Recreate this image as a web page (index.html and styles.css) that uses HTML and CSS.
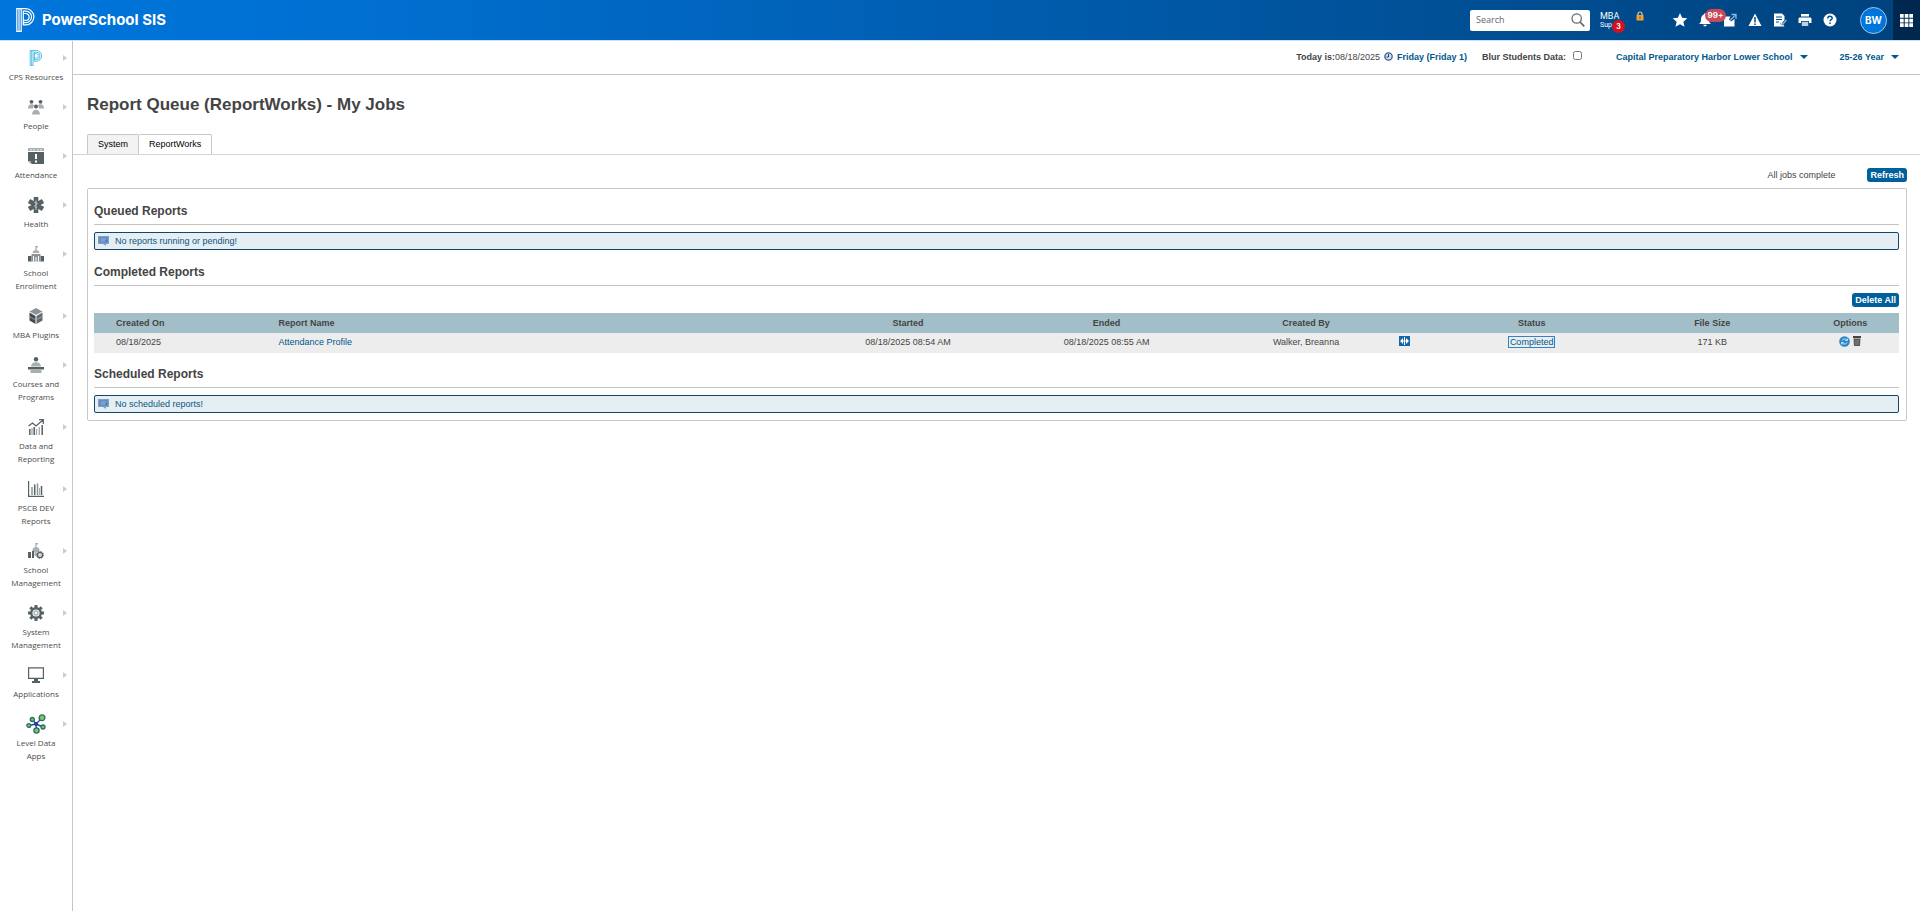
FILE: index.html
```html
<!DOCTYPE html>
<html lang="en">
<head>
<meta charset="utf-8">
<title>Report Queue (ReportWorks) - My Jobs</title>
<link rel="stylesheet" href="styles.css">
</head>
<body>
<svg class="defs" aria-hidden="true">
  <symbol id="ps" viewBox="0 0 19 24"><g fill="none" stroke="currentColor" stroke-width="1.200"><path d="M.8.7h4.4v22.6H.8zM3 .7v22.6"/><path d="M5.200 .7h4.600a8.100 8.100 0 0 1 0 16.200H7.300V3.100h2.500a5.700 5.700 0 0 1 0 11.500H7.300M7.300 5.500h2.400a3.400 3.400 0 0 1 0 6.800H7.300"/></g></symbol>
  <symbol id="note" viewBox="0 0 11 10"><path d="M0 0h11v8H8v2L5 8H0z" fill="#7d9fcb"/><path d="M1.500 1.500h8v5h-8z" fill="#4c78b5"/><path d="M2.500 3h6M2.500 5h5" stroke="#a9c3e4"/></symbol>
</svg>
<header class="topbar">
  <a class="brand" href="#"><svg class="brand-mark"><use href="#ps"/></svg>PowerSchool SIS</a>
  <div class="tools">
    <form class="search"><input type="search" placeholder="Search" aria-label="Search"><button type="button" aria-label="Run search"><svg viewBox="0 0 14 14" width="14" height="14"><g fill="none" stroke="#666" stroke-width="1.200"><circle cx="5.700" cy="5.500" r="4.700"/><path d="M9 9l4.300 4.300" stroke-width="1.700"/></g></svg></button></form>
    <a class="mba" href="#"><span>MBA</span><span class="mba-sub">Sup</span><span class="mba-count">3</span></a>
    <a class="lock" href="#" aria-label="Lock"><svg viewBox="0 0 8 10" width="8" height="10"><path d="M2 5V3a2 2 0 0 1 4 0v2" fill="none" stroke="#d8d0c0" stroke-width="1.200"/><path d="M.5 4h7v5.500h-7z" fill="#f3a136"/><path d="M4 5.500v2.500" stroke="#85500c"/></svg></a>
    <nav class="icons">
      <a href="#" aria-label="Favorites"><svg viewBox="0 0 16 16"><path fill="#fff" d="M8 1l2.100 4.800 5.200.5-3.900 3.400 1.100 5.100L8 12.200l-4.500 2.600 1.100-5.100L.7 6.300l5.200-.5z"/></svg></a>
      <a class="bell" href="#" aria-label="Notifications"><svg viewBox="0 0 16 16"><path fill="#fff" d="M8 1.500c1 0 1.300.6 1.300 1.200C11.500 3.500 12 5.500 12 8c0 2 .8 3 2 4H2c1.200-1 2-2 2-4 0-2.500.5-4.500 2.700-5.300C6.700 2 7 1.500 8 1.500zM6.300 12.700h3.400a1.700 1.700 0 0 1-3.400 0z"/></svg><span class="badge">99+</span></a>
      <a href="#" aria-label="Open window"><svg viewBox="0 0 16 16"><path fill="#fff" d="M2 4.500h6.500L7 7.500l2 2L12.500 7v7.500H2z"/><path d="M8 8.500L13 3.500M9.500 2.500H14V7" fill="none" stroke="#8eb4d8" stroke-width="1.300"/></svg></a>
      <a href="#" aria-label="Alerts"><svg viewBox="0 0 16 16"><path fill="#fff" d="M8 1.500l6.500 12.500h-13z"/><path d="M8 5v5.500M8 11.500v1.500" stroke="#004b8f" stroke-width="1.500"/></svg></a>
      <a href="#" aria-label="Report queue"><svg viewBox="0 0 16 16"><path fill="#fff" d="M2 1.500h8l2.500 2.500v4L10 11l2.500 3.500H2z"/><path d="M4 5h6M4 7.500h6M4 10h3" stroke="#004b8f"/><path d="M8 11l2 2 4.500-5" fill="none" stroke="#8eb4d8" stroke-width="1.300"/></svg></a>
      <a href="#" aria-label="Print"><svg viewBox="0 0 16 16"><path fill="#fff" d="M4 2h8v2.500H4zM3 5.500h10c1 0 1.500.6 1.500 1.500v4H12V9H4v2H1.500V7c0-1 .5-1.500 1.500-1.500z"/><path fill="#b9d0e6" d="M4.800 9.800h6.400v4.200H4.800z"/></svg></a>
      <a href="#" aria-label="Help"><svg viewBox="0 0 16 16"><circle cx="8" cy="8" r="6.500" fill="#fff"/><path d="M5.800 6.500C5.800 3.700 10.200 3.700 10.200 6.200 10.200 7.700 8 7.700 8 9.300M8 10.500v1.500" fill="none" stroke="#004b8f" stroke-width="1.500"/></svg></a>
    </nav>
    <button class="avatar" type="button">BW</button>
    <button class="apps" type="button" aria-label="App switcher"><svg viewBox="0 0 13 13" width="13" height="13"><path fill="#fff" d="M0 0h3.700v3.700H0zM4.700 0h3.700v3.700H4.700zM9.300 0H13v3.700H9.300zM0 4.700h3.700v3.700H0zM4.700 4.700h3.700v3.700H4.700zM9.300 4.700H13v3.700H9.300zM0 9.300h3.700V13H0zM4.700 9.300h3.700V13H4.700zM9.300 9.300H13V13H9.300z"/></svg></button>
  </div>
</header>
<div class="shell">
  <nav class="side">
    <a href="#"><svg class="ps-icon"><use href="#ps"/></svg><span>CPS Resources</span></a>
    <a href="#"><svg viewBox="0 0 16 16"><g fill="#566166"><circle cx="3.500" cy="2.800" r="1.900"/><circle cx="12.500" cy="2.800" r="1.900"/><circle cx="8" cy="7.500" r="2"/></g><path fill="#a9afb1" d="M0 9.500C0 4.500 5 5 6 6L5 9.500zM16 9.500C16 4.500 11 5 10 6l1 3.500zM4 15.500c0-6.500 8-6.500 8 0z"/></svg><span>People</span></a>
    <a href="#"><svg viewBox="0 0 16 16"><path fill="#a9afb1" d="M0 0h16v3H0z"/><path d="M3 1v1.500M6 1v1.500M10 1v1.500M13 1v1.500" stroke="#fff"/><path fill="#566166" d="M0 4h16v12H4l-4-3z"/><path d="M0 13h3v3" fill="#a9afb1"/><path d="M8 6v5M8 12.500v2" stroke="#fff" stroke-width="2"/></svg><span>Attendance</span></a>
    <a href="#"><svg viewBox="0 0 16 16"><path d="M8 0v16M1 4l14 8M15 4L1 12" stroke="#566166" stroke-width="4.600"/><path d="M8 3.500v9.500M6.300 5.500c3 0 4 1 1.700 2.200-2.200 1.300-1 2.300.8 2.800" fill="none" stroke="#dde0e1" stroke-width=".8"/></svg><span>Health</span></a>
    <a href="#"><svg viewBox="0 0 16 16"><path d="M8 0v4M8 .8h2" stroke="#8b9396"/><path fill="#a9afb1" d="M4.500 7C4.500 3 11.500 3 11.500 7z"/><path fill="#566166" d="M0 10h3.500v5.500H0zM12.500 10H16v5.500h-3.500z"/><path fill="#8b9396" d="M3.500 8h9v7.500h-9z"/><path d="M5.500 10v5.500M10.500 10v5.500M8 11v4.500" stroke="#fff"/></svg><span>School<br>Enrollment</span></a>
    <a href="#"><svg viewBox="0 0 16 16"><path fill="#8b9396" d="M8 0l6.500 3.500L8 7 1.500 3.500z"/><path fill="#444c50" d="M1.500 4.500L7.500 8v8l-6-3.500z"/><path fill="#626a6d" d="M14.500 4.500L8.500 8v8l6-3.500z"/><path d="M1.500 8.500l6 3.500 7-3.500" fill="none" stroke="#a9afb1" stroke-width=".8"/></svg><span>MBA Plugins</span></a>
    <a href="#"><svg viewBox="0 0 16 16"><circle cx="8" cy="2.200" r="2.200" fill="#566166"/><path fill="#a9afb1" d="M3 9.500C3 3.700 13 3.700 13 9.500z"/><path fill="#566166" d="M0 10h16v2.500H0z"/><path fill="#a9afb1" d="M2.500 13h11v3h-11z"/></svg><span>Courses and<br>Programs</span></a>
    <a href="#"><svg viewBox="0 0 16 16"><path d="M.5 7l4-3 3.500 3 7-6M11 .7h4.300V5" fill="none" stroke="#566166" stroke-width="1.200"/><path d="M1.800 10v6M6.200 8v8M14.200 6v10" stroke="#566166" stroke-width="1.500"/><path d="M4 9v7M8.500 10v6M11.300 8v8" stroke="#a9afb1" stroke-width="1.400"/></svg><span>Data and<br>Reporting</span></a>
    <a href="#"><svg viewBox="0 0 16 16"><path d="M.6 0v15.400H16" fill="none" stroke="#566166" stroke-width="1.200"/><path d="M4 6v8M9.500 2.500V14" stroke="#8b9396" stroke-width="1.500"/><path d="M6.700 3.500V14M13.500 5v9" stroke="#566166" stroke-width="1.500"/><path d="M11.500 7v7" stroke="#a9afb1"/></svg><span>PSCB DEV<br>Reports</span></a>
    <a href="#"><svg viewBox="0 0 16 16"><path d="M8 0v4M8 .8h2" stroke="#8b9396"/><path fill="#a9afb1" d="M4.500 7C4.500 3 11.500 3 11.500 7v2h-7z"/><path fill="#566166" d="M0 9h3v6H0zM4 8h2v7H4z"/><path fill="#a9afb1" d="M6.500 9h2v4h-2z"/><circle cx="12" cy="12" r="2.600" fill="#d5d8d9" stroke="#566166" stroke-width="1.300"/><circle cx="12" cy="12" r="3.500" fill="none" stroke="#566166" stroke-dasharray="1.300 1.450"/></svg><span>School<br>Management</span></a>
    <a href="#"><svg viewBox="0 0 16 16"><circle cx="8" cy="8" r="4.800" fill="none" stroke="#566166" stroke-width="2.400"/><path d="M8 0v3M8 13v3M0 8h3M13 8h3M2.300 2.300l2.200 2.200M11.500 11.500l2.200 2.200M13.700 2.300l-2.200 2.200M4.500 11.500l-2.200 2.200" stroke="#566166" stroke-width="3"/><circle cx="8" cy="8" r="2" fill="none" stroke="#a9afb1" stroke-width="1.300"/></svg><span>System<br>Management</span></a>
    <a href="#"><svg viewBox="0 0 16 16"><path d="M.6.800h14.800v10.600H.6z" fill="none" stroke="#566166" stroke-width="1.200"/><path fill="#566166" d="M6 12h4v2h2v2H4v-2h2z"/></svg><span>Applications</span></a>
    <a href="#"><svg class="wide" viewBox="0 0 20 20"><path d="M10 10l6-6M10 10L6.500 5.500M10 10l-7 1.500M10 10l7 3M10 10l.5 6" stroke="#2a4b9b" stroke-width="1.400"/><g fill="#7cc46c" stroke="#2b6d63" stroke-width="1.300"><circle cx="16" cy="3.800" r="2.900"/><circle cx="6.300" cy="5.500" r="2"/><circle cx="2.800" cy="11.500" r="1.900"/><circle cx="17" cy="13" r="2"/><circle cx="10.500" cy="16.500" r="2.600"/></g><circle cx="10" cy="10" r="2" fill="#1c3fa0"/></svg><span>Level Data<br>Apps</span></a>
  </nav>
  <div class="page">
    <div class="context">
      <div class="today"><b>Today is:</b>08/18/2025 <svg viewBox="0 0 9 9" width="9" height="9"><circle cx="4.500" cy="4.500" r="3.700" fill="#cfe0f2" stroke="#36608f" stroke-width="1.300"/><path d="M4.500 2v3H2.500" fill="none" stroke="#223f66"/></svg> <a href="#">Friday (Friday 1)</a></div>
      <label class="blur">Blur Students Data: <input type="checkbox"></label>
      <button class="school" type="button">Capital Preparatory Harbor Lower School<i></i></button>
      <button class="term" type="button">25-26 Year<i></i></button>
    </div>
    <h1>Report Queue (ReportWorks) - My Jobs</h1>
    <nav class="tabs"><a href="#">System</a><a class="on" href="#">ReportWorks</a></nav>
    <main>
      <div class="status-line"><span>All jobs complete</span><button class="btn" type="button">Refresh</button></div>
      <div class="panel">
        <h2>Queued Reports</h2>
        <p class="msg"><svg viewBox="0 0 11 10" width="11" height="10"><use href="#note"/></svg>No reports running or pending!</p>
        <h2>Completed Reports</h2>
        <div class="actions"><button class="btn" type="button">Delete All</button></div>
        <table>
          <colgroup><col class="c1"><col class="c2"><col class="c3"><col class="c4"><col class="c5"><col class="c6"><col class="c7"><col class="c8"><col class="c9"></colgroup>
          <thead><tr><th class="l">Created On</th><th class="l">Report Name</th><th>Started</th><th>Ended</th><th>Created By</th><th></th><th>Status</th><th>File Size</th><th>Options</th></tr></thead>
          <tbody><tr><td class="l">08/18/2025</td><td class="l"><a href="#">Attendance Profile</a></td><td>08/18/2025 08:54 AM</td><td>08/18/2025 08:55 AM</td><td>Walker, Breanna</td>
          <td class="pic"><svg viewBox="0 0 11 10" width="11" height="10"><path fill="#1464a8" d="M0 0h11v10H0z"/><path fill="#fff" d="M1 5l3-3v6zM10 5L7 2v6zM5 1h1v8H5z"/><path d="M2 5h7" stroke="#fff"/></svg></td>
          <td><a class="done" href="#">Completed</a></td><td>171 KB</td>
          <td class="pic"><span class="opts"><a href="#" aria-label="Run again"><svg viewBox="0 0 11 11" width="11" height="11"><circle cx="5.500" cy="5.500" r="5.300" fill="#2a86c8"/><path d="M3 4.500c1-2 4-2 5 0M8.300 2.500v2H6.500M8 6.500c-1 2-4 2-5 0M2.700 8.500v-2h1.800" fill="none" stroke="#d5ecfb"/></svg></a><a href="#" aria-label="Delete"><svg viewBox="0 0 8 10" width="8" height="10"><path fill="#444" d="M0 0h8v2H0z"/><path fill="#5a5a5a" d="M.5 2.500h7L7 10H1z"/><path d="M3 4v5M5 4v5" stroke="#999" stroke-width=".7"/></svg></a></span></td></tr></tbody>
        </table>
        <h2>Scheduled Reports</h2>
        <p class="msg"><svg viewBox="0 0 11 10" width="11" height="10"><use href="#note"/></svg>No scheduled reports!</p>
      </div>
    </main>
  </div>
</div>
</body>
</html>
```
FILE: styles.css
```css
* { box-sizing: border-box; }
body {
  margin: 0;
  min-height: 100vh;
  display: flex;
  flex-direction: column;
  font: 9px/12px "Liberation Sans", Arial, sans-serif;
  color: #444;
  background: #fff;
}
a { color: #00578c; text-decoration: none; }
button { font: inherit; border: 0; padding: 0; background: none; cursor: pointer; }
svg { display: block; flex: none; }
.defs { position: absolute; width: 0; height: 0; }

.topbar {
  height: 40px;
  display: flex;
  justify-content: space-between;
  align-items: center;
  background: linear-gradient(90deg, #0075db 0%, #0070d2 18%, #00427c 100%);
}
.brand {
  display: flex;
  align-items: center;
  gap: 7px;
  padding-left: 16px;
  color: #fff;
  font: bold 15px/20px Inter, sans-serif;
}
.brand-mark { width: 19px; height: 24px; }
.tools { display: flex; align-items: center; height: 100%; }
.search {
  display: flex;
  align-items: center;
  width: 120px;
  height: 21px;
  padding: 0 5px 0 6px;
  background: #fff;
  border-radius: 2px;
}
.search input {
  flex: 1;
  min-width: 0;
  border: 0;
  padding: 0;
  outline: 0;
  font: 9px/12px "Open Sans", sans-serif;
}
.search input::placeholder { color: #666; }
.mba {
  position: relative;
  display: flex;
  flex-direction: column;
  width: 24px;
  margin-left: 10px;
  color: #fff;
  font: 9px/9px Roboto, sans-serif;
}
.mba-sub { font-size: 7px; line-height: 8px; }
.mba-count {
  position: absolute;
  right: -1px;
  top: 8px;
  width: 13px;
  height: 13px;
  border-radius: 50%;
  background: #d8101e;
  font: bold 7px/13px Inter, sans-serif;
  text-align: center;
}
.lock { margin: 0 28px 8px 12px; }
.icons { display: flex; gap: 9px; }
.icons a { position: relative; }
.icons svg { width: 16px; height: 16px; }
.badge {
  position: absolute;
  left: 8px;
  top: -3px;
  z-index: 1;
  width: 21px;
  height: 13px;
  border-radius: 7px;
  background: #c84a58;
  color: #fff;
  font: bold 8px/13px Inter, sans-serif;
  text-align: center;
}
.avatar {
  width: 27px;
  height: 27px;
  margin: 0 6px 0 22px;
  border: 1px solid #9cc8f0;
  border-radius: 50%;
  background: #0075db;
  color: #fff;
  font: bold 10px/20px Inter, sans-serif;
}
.apps {
  width: 27px;
  height: 100%;
  display: grid;
  place-items: center;
  background: #00284f;
}

.shell { flex: 1; display: flex; border-top: 1px solid #c5e3fc; }
.side {
  width: 73px;
  flex: none;
  padding-top: 1px;
  border-right: 1px solid #c3c7cb;
}
.side a {
  position: relative;
  display: flex;
  flex-direction: column;
  align-items: center;
  gap: 4px;
  padding: 8px 0;
  color: #4c4c4c;
  font: 8px/13px "Open Sans", sans-serif;
  text-align: center;
}
.side a::after {
  content: "";
  position: absolute;
  right: 5px;
  top: 13px;
  border: 3px solid transparent;
  border-left: 4px solid #c8ccce;
  border-right: 0;
}
.side svg { width: 16px; height: 16px; overflow: visible; }
.side .wide { width: 20px; height: 20px; margin: -2px 0; }
.side .ps-icon { color: #39b1dc; }

.page { flex: 1; min-width: 0; }
.context {
  display: flex;
  justify-content: flex-end;
  align-items: center;
  height: 34px;
  padding: 0 21px 2px 0;
  border-bottom: 1px solid #c8c8c8;
}
.context b, .blur, .context a, .context button { font-weight: bold; }
.context a, .context button { color: #00578c; }
.today { display: flex; align-items: center; }
.today svg { margin: 0 4px; }
.blur { display: flex; align-items: center; margin: 0 34px 0 15px; }
.blur input { width: 9px; height: 9px; margin: 0 0 3px 7px; }
.context button { display: flex; align-items: center; gap: 7px; }
.context .term { margin-left: 32px; }
.context i { border: 4px solid transparent; border-top-color: #00578c; border-bottom: 0; }
h1 { margin: 0; padding: 19px 14px 18px; font: bold 17px/22px "Liberation Sans", Arial, sans-serif; }
.tabs { display: flex; align-items: flex-end; padding-left: 14px; border-bottom: 1px solid #d4d4d4; }
.tabs a {
  padding: 3px 10px 4px;
  border: 1px solid #c8c8c8;
  border-bottom: 0;
  border-radius: 2px 2px 0 0;
  background: #f3f3f3;
  color: #000;
}
.tabs .on { background: #fff; border-left: 0; }
main { padding: 13px 13px 13px 14px; }
.status-line { display: flex; justify-content: flex-end; align-items: center; gap: 32px; padding-bottom: 6px; }
.btn {
  height: 14px;
  padding: 0 3px;
  border-radius: 3px;
  background: #00609c;
  color: #fff;
  font: bold 9px/14px "Liberation Sans", Arial, sans-serif;
}
.panel { padding: 14px 7px 7px 6px; border: 1px solid #c8c8c8; border-radius: 2px; }
h2 {
  margin: 0 0 7px;
  padding-bottom: 4px;
  border-bottom: 1px solid #c4c4c4;
  font: bold 12px/17px "Liberation Sans", Arial, sans-serif;
}
.msg {
  display: flex;
  align-items: center;
  gap: 6px;
  height: 18px;
  margin: 0 0 14px;
  padding-left: 3px;
  border: 1px solid #12486b;
  border-radius: 2px;
  background: #e5eef2;
  color: #0c567f;
}
.msg:last-child { margin-bottom: 0; }
.actions { display: flex; justify-content: flex-end; padding-bottom: 6px; }
table { width: 100%; margin-bottom: 13px; border-collapse: collapse; table-layout: fixed; }
th, td { height: 20px; padding: 0; text-align: center; }
th { background: #a2bec9; }
td { background: #ededed; padding-bottom: 2px; }
.pic { padding-bottom: 4px; }
.l { padding-left: 22px; text-align: left; }
td svg { margin: 0 auto; }
.c1 { width: 9%; }
.c2 { width: 32.7%; }
.c3 { width: 6.8%; }
.c4 { width: 15.2%; }
.c5 { width: 6.9%; }
.c6 { width: 4%; }
.c7 { width: 10.1%; }
.c8 { width: 9.9%; }
.c9 { width: 5.4%; }
.done { display: inline-block; padding: 0 1px; border: 1px solid #2a86c8; line-height: 10px; }
.opts { display: flex; justify-content: center; gap: 3px; }
.opts svg { margin: 0; }
```
